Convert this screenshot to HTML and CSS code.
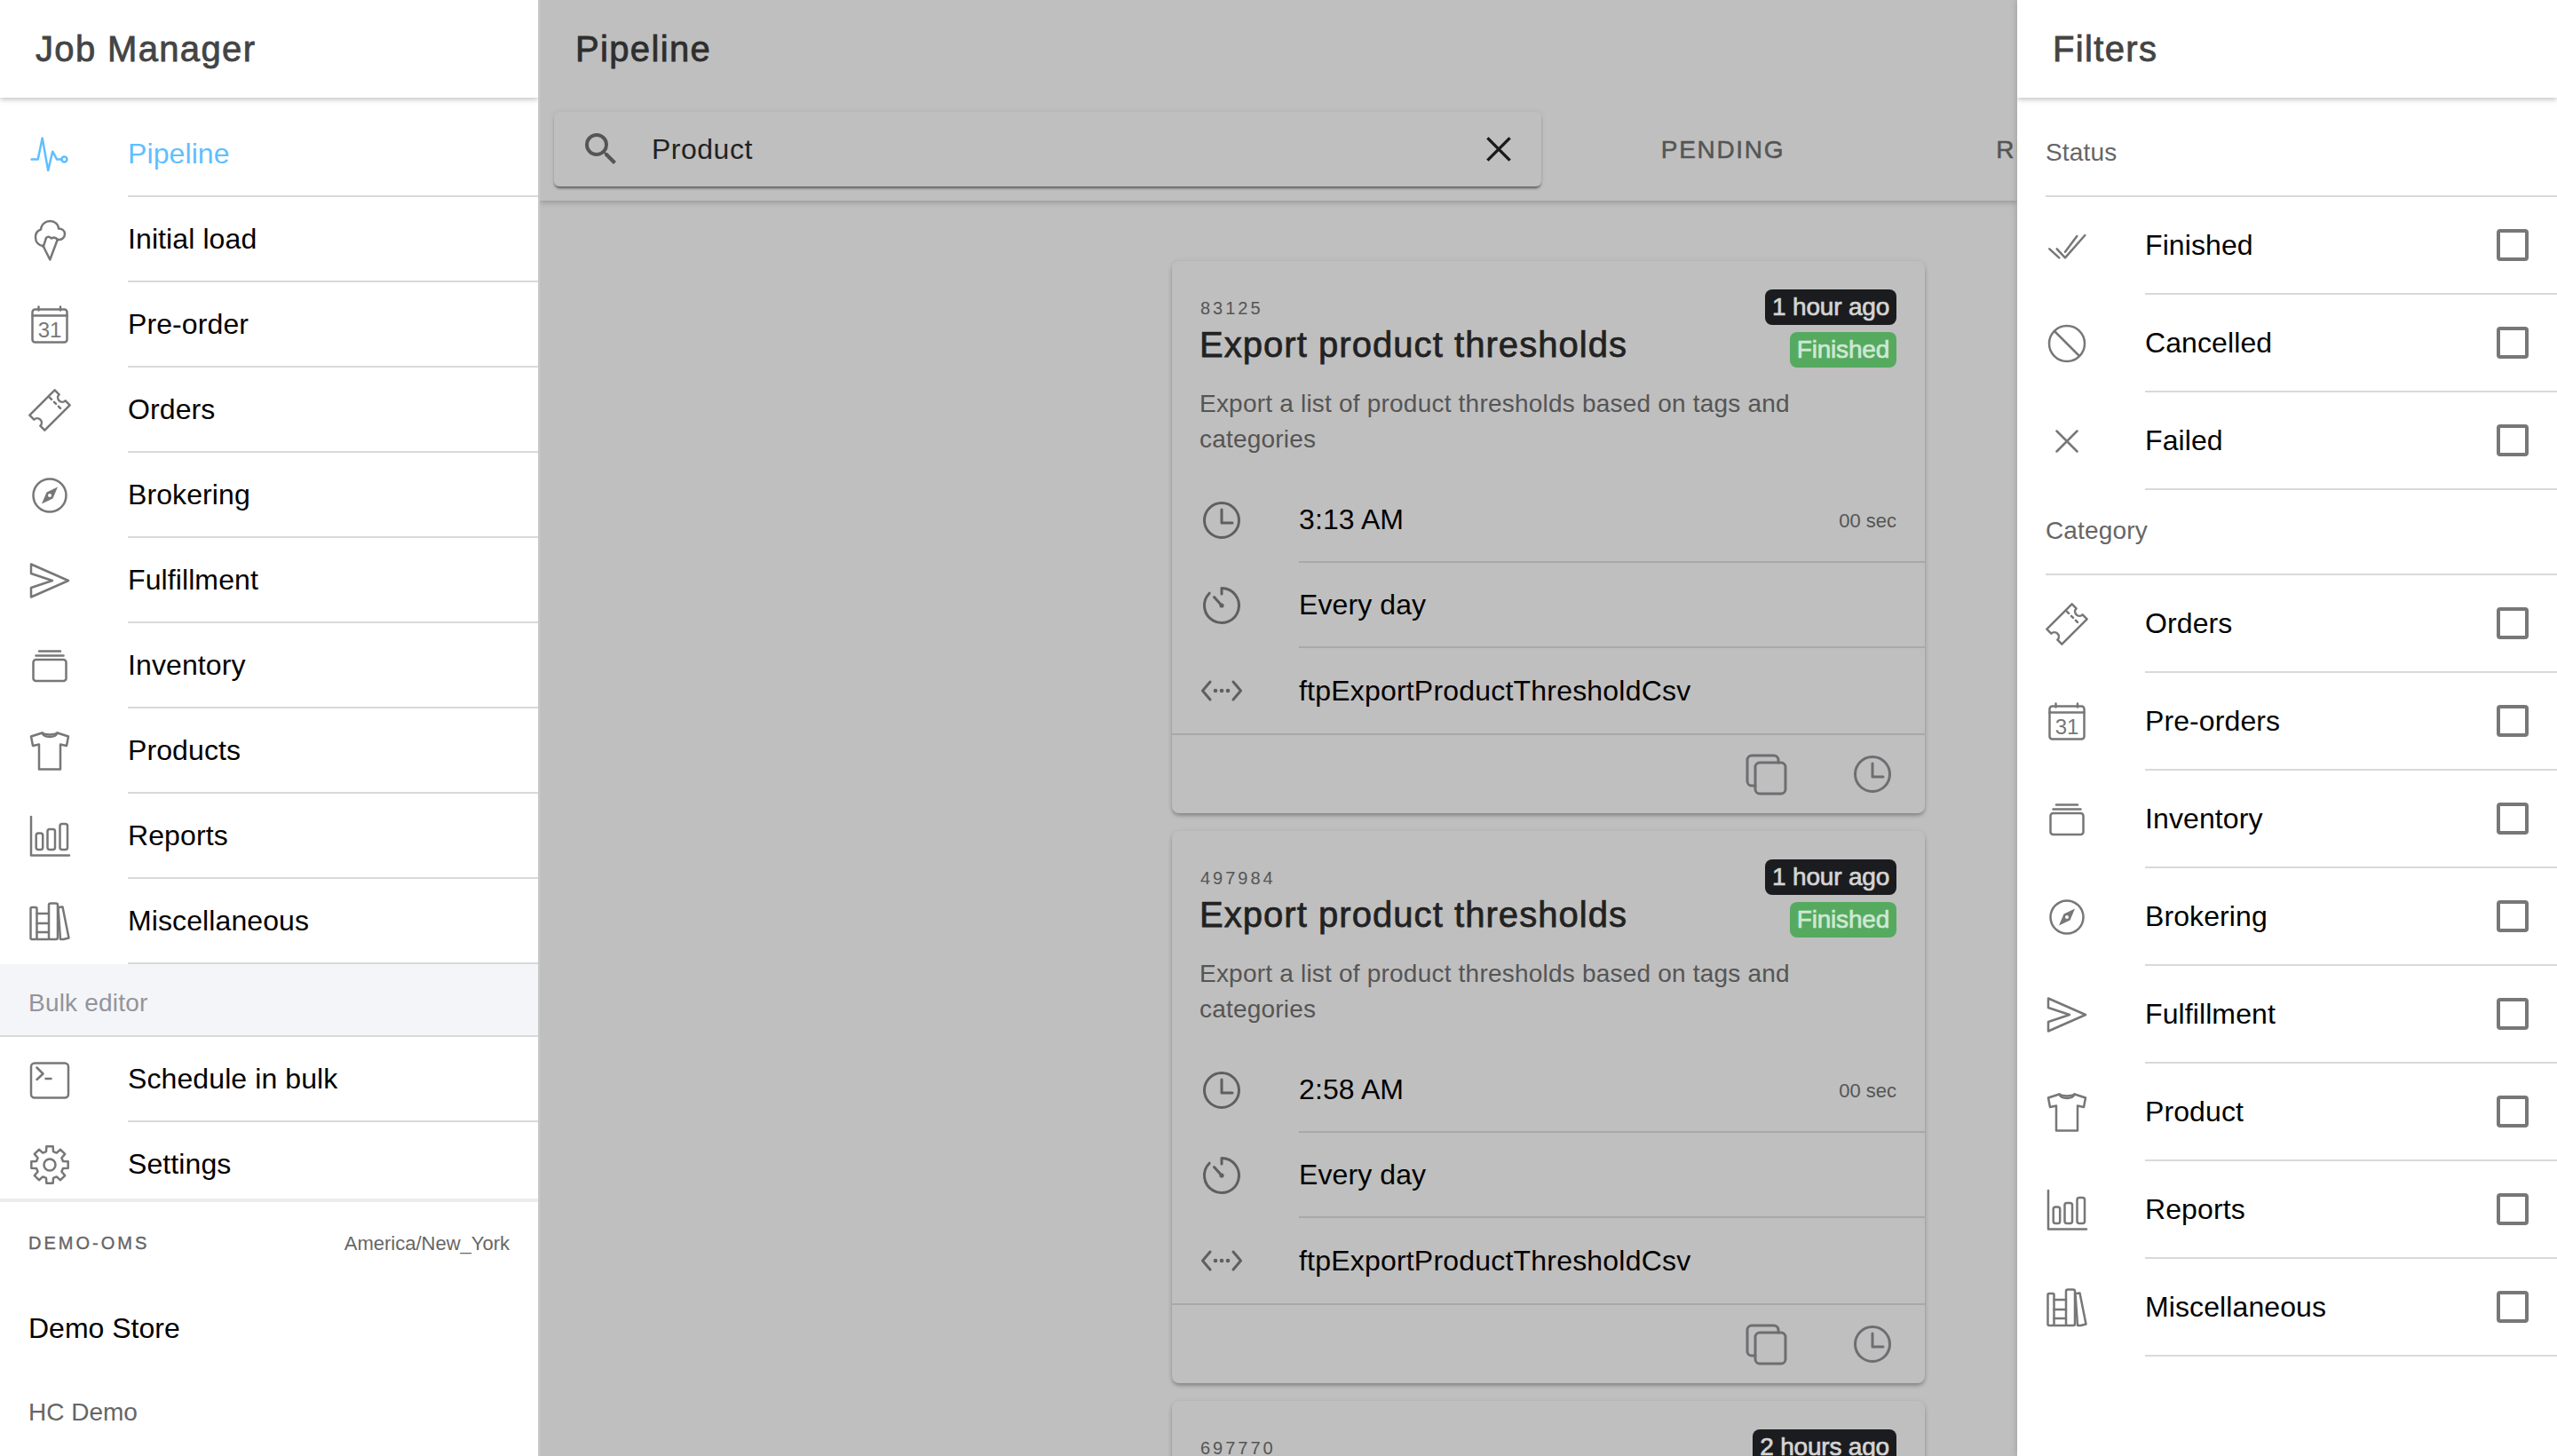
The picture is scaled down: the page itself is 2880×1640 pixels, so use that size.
FILE: index.html
```html
<!DOCTYPE html>
<html lang="en">
<head>
<meta charset="utf-8">
<title>Job Manager</title>
<link rel="stylesheet" href="styles.css">
</head>
<body>
<svg class="sprite" xmlns="http://www.w3.org/2000/svg">
  <symbol id="i-pulse" viewBox="0 0 48 48"><path d="M3.600 29.600h7.100l5-24 6.500 36.400 5-21.300 5 8.900h5"/><circle cx="40.400" cy="29.600" r="3"/></symbol>
  <symbol id="i-cream" viewBox="0 0 48 48"><path d="M14 12.500C14.500 7 19 3 24.500 3S34 7 34 11.500C38 11.500 41 14 41 17.500 41 21.500 37.500 24.500 33 24 31 21.500 28.500 21 26 22.500 24 20.500 21.500 20 20 22 19 25 18 29 16.700 31.300 12 30.500 8 27 8 21.500 8 17 10.500 13.500 14 12.500z"/><path d="M16.700 31.300 24.300 46.500 32.700 24"/><circle class="solid" cx="16.700" cy="31.300" r="1.700"/><circle class="solid" cx="32.700" cy="24" r="1.700"/></symbol>
  <symbol id="i-ticket" viewBox="0 0 48 48"><g transform="rotate(-45 24 24)"><path d="M4 12h40v7a5 5 0 0 0 0 10v7H4v-7a5 5 0 0 0 0-10z"/><path d="M34 14v20" stroke-dasharray="3 4"/></g></symbol>
  <symbol id="i-compass" viewBox="0 0 48 48"><circle cx="24" cy="24" r="18.500"/><path class="solid" d="M33 14.500 27.500 27.500 15 33.500 20.500 20.500zM24 22a2 2 0 1 0 0 4 2 2 0 0 0 0-4z" fill-rule="evenodd"/></symbol>
  <symbol id="i-send" viewBox="0 0 48 48"><path d="M3 5.500 45 24 3 42.500V32l24-8-24-8z"/></symbol>
  <symbol id="i-inv" viewBox="0 0 48 48"><rect x="5.500" y="17" width="37" height="24" rx="3"/><path d="M8.500 12.500h31M12 7.500h24"/></symbol>
  <symbol id="i-shirt" viewBox="0 0 48 48"><path d="M15.500 3.500C19 6 29 6 32.500 3.500L45 7.500 43 18l-7-1.500V44.500H12V16.500L5 18 3 7.500z"/><path d="M15.500 3.500C17 9.500 31 9.500 32.500 3.500"/></symbol>
  <symbol id="i-bars" viewBox="0 0 48 48"><path d="M3 2v43.500h43"/><rect x="8.700" y="20.500" width="7.500" height="18.500" rx="2.500"/><rect x="21.500" y="16" width="8.500" height="23" rx="2.500"/><rect x="35.500" y="10" width="8.500" height="29" rx="2.500"/></symbol>
  <symbol id="i-books" viewBox="0 0 48 48"><rect x="2.500" y="8" width="7" height="36" rx="1.500"/><path d="M9.500 15H23M9.500 26H23M9.500 36H23M9.500 44H23"/><rect x="23" y="3.500" width="10" height="40.500" rx="2"/><path d="M33.500 8 38.500 7.500 45.500 42.500 39.500 44 36 44z"/></symbol>
  <symbol id="i-term" viewBox="0 0 48 48"><rect x="3" y="5.500" width="42" height="39" rx="4"/><path d="M9.500 10.500l7 7-7 6.500M19.500 23h6"/></symbol>
  <symbol id="i-gear" viewBox="0 0 48 48"><g transform="translate(24 24)"><path d="M-3.650-20.680 3.650-20.680 4.010-14.970 7.750-13.420 12.050-17.200 17.200-12.050 13.420-7.750 14.970-4.010 20.680-3.650 20.680 3.650 14.970 4.010 13.420 7.750 17.200 12.050 12.050 17.200 7.750 13.420 4.010 14.970 3.650 20.680-3.650 20.680-4.010 14.970-7.750 13.420-12.050 17.200-17.200 12.050-13.420 7.750-14.970 4.010-20.680 3.650-20.680-3.650-14.970-4.010-13.420-7.750-17.200-12.050-12.050-17.200-7.750-13.420-4.010-14.970z"/><circle r="6.500"/></g></symbol>
  <symbol id="i-checks" viewBox="0 0 48 48"><path d="M4.300 27.300l11 10M12.700 27.300l9.300 10L44.300 12M22 30.700 35.300 13"/></symbol>
  <symbol id="i-ban" viewBox="0 0 48 48"><circle cx="24" cy="24" r="20"/><path d="M10 10l28 28"/></symbol>
  <symbol id="i-x" viewBox="0 0 48 48"><path d="M12.500 12.500l23 23M35.500 12.500l-23 23"/></symbol>
  <symbol id="i-clock" viewBox="0 0 48 48"><circle cx="24" cy="24" r="19.500"/><path d="M24 12v15h12"/></symbol>
  <symbol id="i-timer" viewBox="0 0 48 48"><path d="M24 4.500a19.500 19.500 0 1 1-13.800 5.700M24 4.500V11"/><path d="M15.500 14.500 24 24"/><circle class="solid" cx="24" cy="24" r="2.600"/></symbol>
  <symbol id="i-code" viewBox="0 0 48 48"><path d="M11 14 2.500 24l8.500 10M37 14l8.500 10L37 34"/><circle class="solid" cx="17" cy="24" r="2.300"/><circle class="solid" cx="24" cy="24" r="2.300"/><circle class="solid" cx="31" cy="24" r="2.300"/></symbol>
  <symbol id="i-copy" viewBox="0 0 48 48"><rect x="12" y="11" width="34" height="35" rx="5"/><path d="M38 11V8a5 5 0 0 0-5-5H8a5 5 0 0 0-5 5v24a5 5 0 0 0 5 5h4"/></symbol>
  <symbol id="i-search" viewBox="0 0 24 24"><path class="solid" d="M15.500 14h-.79l-.28-.27A6.471 6.471 0 0 0 16 9.500 6.500 6.500 0 1 0 9.500 16c1.610 0 3.090-.59 4.230-1.570l.27.28v.79l5 4.990L20.490 19l-4.990-5zm-6 0C7.010 14 5 11.990 5 9.500S7.010 5 9.500 5 14 7.010 14 9.500 11.990 14 9.500 14z"/></symbol>
  <symbol id="i-close" viewBox="0 0 24 24"><path class="thick" d="M5.700 5.700 18.300 18.300M18.300 5.700 5.700 18.300"/></symbol>
</svg>

<div class="app">
  <aside class="sidebar">
    <header class="panel-head"><h1 class="panel-title">Job Manager</h1></header>
    <div class="sidebar-scroll">
      <nav class="nav-list">
        <a class="row active"><svg class="icon"><use href="#i-pulse"/></svg><span class="row-main">Pipeline</span></a>
        <a class="row"><svg class="icon"><use href="#i-cream"/></svg><span class="row-main">Initial load</span></a>
        <a class="row"><svg class="icon" viewBox="0 0 48 48"><rect x="4.500" y="6.500" width="39" height="37" rx="3"/><path d="M4.500 13.500h39M11.500 3.500v4M36 3.500v4"/><text class="cal-num" x="24" y="38" text-anchor="middle">31</text></svg><span class="row-main">Pre-order</span></a>
        <a class="row"><svg class="icon"><use href="#i-ticket"/></svg><span class="row-main">Orders</span></a>
        <a class="row"><svg class="icon"><use href="#i-compass"/></svg><span class="row-main">Brokering</span></a>
        <a class="row"><svg class="icon"><use href="#i-send"/></svg><span class="row-main">Fulfillment</span></a>
        <a class="row"><svg class="icon"><use href="#i-inv"/></svg><span class="row-main">Inventory</span></a>
        <a class="row"><svg class="icon"><use href="#i-shirt"/></svg><span class="row-main">Products</span></a>
        <a class="row"><svg class="icon"><use href="#i-bars"/></svg><span class="row-main">Reports</span></a>
        <a class="row"><svg class="icon"><use href="#i-books"/></svg><span class="row-main">Miscellaneous</span></a>
      </nav>
      <div class="group-head">Bulk editor</div>
      <nav class="nav-list">
        <a class="row"><svg class="icon"><use href="#i-term"/></svg><span class="row-main">Schedule in bulk</span></a>
        <a class="row"><svg class="icon"><use href="#i-gear"/></svg><span class="row-main">Settings</span></a>
      </nav>
    </div>
    <footer class="side-foot">
      <div class="foot-top"><span class="overline strong">DEMO-OMS</span><span class="note foot-note">America/New_York</span></div>
      <div class="store-name">Demo Store</div>
      <div class="store-sub">HC Demo</div>
    </footer>
  </aside>

  <main class="center">
    <div class="toolbar">
      <header class="center-head"><h2 class="panel-title">Pipeline</h2></header>
      <div class="search-row">
        <div class="search">
          <svg class="icon search-ico"><use href="#i-search"/></svg>
          <span class="search-text">Product</span>
          <svg class="icon close-ico"><use href="#i-close"/></svg>
        </div>
        <div class="tabs">
          <span class="tab">PENDING</span>
          <span class="tab">RUNNING</span>
        </div>
      </div>
    </div>
    <div class="cards">
      <article class="card">
        <div class="card-head">
          <div class="card-titles">
            <div class="overline">83125</div>
            <h3 class="card-title">Export product thresholds</h3>
          </div>
          <div class="badges"><span class="badge dark">1 hour ago</span><span class="badge green">Finished</span></div>
        </div>
        <p class="card-desc">Export a list of product thresholds based on tags and categories</p>
        <div class="card-rows">
          <div class="row card-row"><svg class="icon"><use href="#i-clock"/></svg><span class="row-main"><span class="grow">3:13 AM</span><span class="note">00 sec</span></span></div>
          <div class="row card-row"><svg class="icon"><use href="#i-timer"/></svg><span class="row-main">Every day</span></div>
          <div class="row card-row last"><svg class="icon"><use href="#i-code"/></svg><span class="row-main">ftpExportProductThresholdCsv</span></div>
        </div>
        <div class="card-foot"><svg class="icon foot-ico"><use href="#i-copy"/></svg><svg class="icon foot-ico"><use href="#i-clock"/></svg></div>
      </article>
      <article class="card">
        <div class="card-head">
          <div class="card-titles">
            <div class="overline">497984</div>
            <h3 class="card-title">Export product thresholds</h3>
          </div>
          <div class="badges"><span class="badge dark">1 hour ago</span><span class="badge green">Finished</span></div>
        </div>
        <p class="card-desc">Export a list of product thresholds based on tags and categories</p>
        <div class="card-rows">
          <div class="row card-row"><svg class="icon"><use href="#i-clock"/></svg><span class="row-main"><span class="grow">2:58 AM</span><span class="note">00 sec</span></span></div>
          <div class="row card-row"><svg class="icon"><use href="#i-timer"/></svg><span class="row-main">Every day</span></div>
          <div class="row card-row last"><svg class="icon"><use href="#i-code"/></svg><span class="row-main">ftpExportProductThresholdCsv</span></div>
        </div>
        <div class="card-foot"><svg class="icon foot-ico"><use href="#i-copy"/></svg><svg class="icon foot-ico"><use href="#i-clock"/></svg></div>
      </article>
      <article class="card">
        <div class="card-head">
          <div class="card-titles"><div class="overline">697770</div></div>
          <div class="badges"><span class="badge dark">2 hours ago</span></div>
        </div>
      </article>
    </div>
  </main>

  <aside class="filters">
    <header class="panel-head"><h2 class="panel-title">Filters</h2></header>
    <div class="filter-body">
      <div class="filter-label">Status</div>
      <label class="row filter-row"><svg class="icon"><use href="#i-checks"/></svg><span class="row-main"><span class="grow">Finished</span><span class="checkbox"></span></span></label>
      <label class="row filter-row"><svg class="icon"><use href="#i-ban"/></svg><span class="row-main"><span class="grow">Cancelled</span><span class="checkbox"></span></span></label>
      <label class="row filter-row"><svg class="icon"><use href="#i-x"/></svg><span class="row-main"><span class="grow">Failed</span><span class="checkbox"></span></span></label>
      <div class="filter-label">Category</div>
      <label class="row filter-row"><svg class="icon"><use href="#i-ticket"/></svg><span class="row-main"><span class="grow">Orders</span><span class="checkbox"></span></span></label>
      <label class="row filter-row"><svg class="icon" viewBox="0 0 48 48"><rect x="4.500" y="6.500" width="39" height="37" rx="3"/><path d="M4.500 13.500h39M11.500 3.500v4M36 3.500v4"/><text class="cal-num" x="24" y="38" text-anchor="middle">31</text></svg><span class="row-main"><span class="grow">Pre-orders</span><span class="checkbox"></span></span></label>
      <label class="row filter-row"><svg class="icon"><use href="#i-inv"/></svg><span class="row-main"><span class="grow">Inventory</span><span class="checkbox"></span></span></label>
      <label class="row filter-row"><svg class="icon"><use href="#i-compass"/></svg><span class="row-main"><span class="grow">Brokering</span><span class="checkbox"></span></span></label>
      <label class="row filter-row"><svg class="icon"><use href="#i-send"/></svg><span class="row-main"><span class="grow">Fulfillment</span><span class="checkbox"></span></span></label>
      <label class="row filter-row"><svg class="icon"><use href="#i-shirt"/></svg><span class="row-main"><span class="grow">Product</span><span class="checkbox"></span></span></label>
      <label class="row filter-row"><svg class="icon"><use href="#i-bars"/></svg><span class="row-main"><span class="grow">Reports</span><span class="checkbox"></span></span></label>
      <label class="row filter-row"><svg class="icon"><use href="#i-books"/></svg><span class="row-main"><span class="grow">Miscellaneous</span><span class="checkbox"></span></span></label>
    </div>
  </aside>
</div>
</body>
</html>
```

FILE: styles.css
```css
* { box-sizing: border-box; }
html, body { margin: 0; padding: 0; width: 2880px; height: 1640px; overflow: hidden; }
body { font-family: "Liberation Sans", Arial, sans-serif; font-size: 32px; color: #000; background: #bfbfbf; }
h1, h2, h3, p { margin: 0; font-weight: 400; }
.sprite { position: absolute; width: 0; height: 0; overflow: hidden; }

.app { display: grid; grid-template-columns: 608px 1fr 608px; width: 2880px; height: 1640px; overflow: hidden; }

.icon { width: 48px; height: 48px; flex: none; fill: none; stroke: currentColor; stroke-width: 2.5; stroke-linejoin: round; stroke-linecap: round; color: #777; }
.solid { fill: currentColor; stroke: none; }
.thick { stroke-width: 1.7; stroke-linecap: butt; }
.cal-num { font-family: "Liberation Sans", Arial, sans-serif; font-size: 24px; fill: currentColor; stroke: none; }

.panel-head { height: 110px; display: flex; align-items: center; padding-left: 40px; background: #fff; box-shadow: 0 2px 6px rgba(0,0,0,.25); position: relative; z-index: 1; flex: none; }
.panel-title { font-size: 40px; color: #444; letter-spacing: 1.35px; -webkit-text-stroke: .8px currentColor; }

.sidebar { background: #fff; border-right: 2px solid #c9c9c9; display: flex; flex-direction: column; height: 1640px; overflow: hidden; }
.sidebar-scroll { flex: 1; min-height: 0; overflow: hidden; padding-top: 16px; }
.nav-list { display: flex; flex-direction: column; }

.row { display: flex; align-items: center; height: 96px; padding-left: 32px; }
.row-main { flex: 1; min-width: 0; height: 100%; margin-left: 64px; display: flex; align-items: center; border-bottom: 2px solid #d9d9d9; letter-spacing: .1px; }
.grow { flex: 1; }
.active { color: #5fbfff; }
.active .icon { color: #5fbfff; }

.group-head { height: 82px; padding: 8px 0 0 32px; display: flex; align-items: center; background: #f4f5f8; border-bottom: 2px solid #d9d9d9; font-size: 28px; letter-spacing: .2px; color: #92949c; }

.side-foot { height: 290px; flex: none; border-top: 4px solid #ececec; padding: 0 32px; background: #fff; }
.foot-top { display: flex; justify-content: space-between; align-items: center; height: 34px; margin-top: 29px; }
.overline { font-size: 20px; letter-spacing: 3px; line-height: 28px; color: #555; }
.overline.strong { color: #666; -webkit-text-stroke: .4px currentColor; }
.note { font-size: 22px; color: #666; }
.foot-note { padding-top: 2px; }
.store-name { margin-top: 59px; font-size: 32px; line-height: 40px; }
.store-sub { margin-top: 58px; font-size: 28px; line-height: 34px; color: #666; }

.center { position: relative; overflow: hidden; min-width: 0; background: #bfbfbf; display: flex; flex-direction: column; }
.toolbar { height: 226px; flex: none; box-shadow: 0 2px 6px rgba(0,0,0,.22); position: relative; z-index: 1; }
.center-head { height: 110px; display: flex; align-items: center; padding-left: 40px; }
.center-head .panel-title { color: #2e2e2e; }
.search-row { height: 116px; display: flex; align-items: flex-start; padding: 16px 0 0 16px; }
.search { width: 1112px; flex: none; height: 84px; display: flex; align-items: center; padding-left: 29px; border-radius: 6px; background: #bfbfbf; box-shadow: 0 3px 3px -1px rgba(0,0,0,.5), 0 0 6px rgba(0,0,0,.08); }
.search-ico { color: #555; }
.search-text { flex: 1; margin-left: 33px; color: #222; letter-spacing: .5px; }
.close-ico { color: #1a1a1a; margin-right: 24px; }
.tabs { display: flex; margin-left: 15px; flex: none; height: 84px; padding-top: 1px; }
.tab { width: 379px; display: flex; align-items: center; justify-content: center; font-size: 28px; letter-spacing: 1.7px; color: #555; -webkit-text-stroke: .5px currentColor; }

.cards { margin: 68px 0 0 712px; width: 848px; display: flex; flex-direction: column; gap: 20px; flex: none; }
.card { width: 848px; flex: none; min-height: 100px; border-radius: 8px; background: #bfbfbf; box-shadow: 0 3px 5px -1px rgba(0,0,0,.35), 0 0 6px rgba(0,0,0,.06); }
.card-head { display: flex; justify-content: space-between; padding: 32px 32px 0; }
.card-titles { padding-top: 7px; }
.card-title { font-size: 40px; line-height: 52px; margin-top: 1px; margin-left: -1px; color: #222; letter-spacing: 1.05px; -webkit-text-stroke: .75px currentColor; white-space: nowrap; }
.badges { display: flex; flex-direction: column; align-items: flex-end; gap: 8px; }
.badge { height: 40px; padding: 0 8px; border-radius: 8px; display: flex; align-items: center; font-size: 28px; letter-spacing: -.2px; -webkit-text-stroke: .7px currentColor; }
.badge.dark { background: #1b1c1f; color: #d4d4d4; }
.badge.green { background: #55aa60; color: #cfe8d3; }
.card-desc { margin-top: 21px; padding: 0 32px; font-size: 28px; line-height: 40px; letter-spacing: .21px; color: #555; margin-left: -1px; }
.card-rows { margin-top: 23px; }
.card-row .row-main { border-bottom-color: #a8a8a8; padding-right: 32px; margin-left: 63px; }
.card-row .icon { color: #5f5f5f; stroke-width: 3; }
.card-row.last .row-main { border-bottom: 0; letter-spacing: .2px; }
.card-row .note { color: #555; padding-top: 4px; letter-spacing: 0; }
.card-foot { height: 90px; border-top: 2px solid #a8a8a8; display: flex; justify-content: flex-end; align-items: center; gap: 72px; padding-right: 35px; }
.card-foot .foot-ico { color: #6e6e72; stroke-width: 3; }

.filters { background: #fff; height: 1640px; overflow: hidden; box-shadow: -2px 0 6px rgba(0,0,0,.12); position: relative; z-index: 2; }
.filter-body { padding-top: 16px; }
.filter-label { height: 96px; margin-left: 32px; padding-bottom: 3px; display: flex; align-items: center; border-bottom: 2px solid #d9d9d9; font-size: 28px; letter-spacing: .15px; color: #666; }
.filter-row { height: 110px; }
.checkbox { width: 36px; height: 36px; margin-right: 32px; border: 4px solid #777; border-radius: 4px; flex: none; }
```
